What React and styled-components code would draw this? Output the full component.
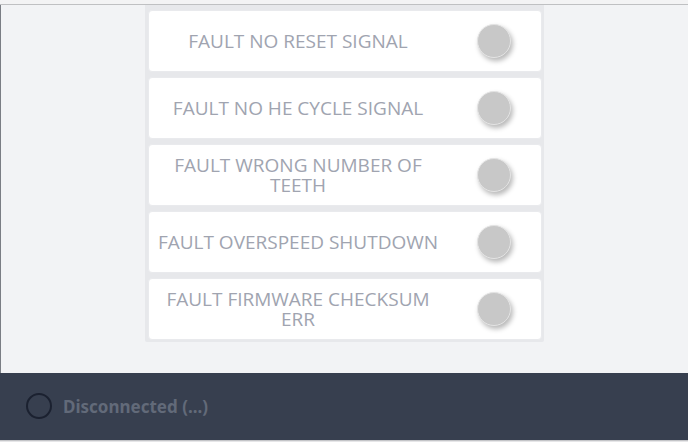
import React, { useLayoutEffect, useRef } from 'react';
import styled, { createGlobalStyle } from 'styled-components';

const GlobalStyle = createGlobalStyle`
    html, body {
        margin: 0;
        padding: 0;
        background: #f2f3f5;
        overflow: hidden;
    }
    * {
        box-sizing: border-box;
    }
`;

const Page = styled.div`
    width: 688px;
    height: 442px;
    display: flex;
    flex-direction: column;
    font-family: "Open Sans", "Noto Sans", sans-serif;
    overflow: hidden;
`;

const TopEdge = styled.div`
    height: 5px;
    flex: none;
    background: #f3f3f4;
    border-bottom: 1px solid #bfc0c2;
`;

const Main = styled.div`
    flex: none;
    height: 368px;
    overflow: hidden;
    padding-bottom: 31px;
    border-left: 1px solid #7a7d84;
    background: #f2f3f5;
`;

const FaultList = styled.div`
    width: 399px;
    margin: 0 auto;
    padding: 3px 2px 2px 3px;
    display: flex;
    flex-direction: column;
    gap: 5px;
    background: #e7e8eb;
    border-radius: 2px;
`;

const Card = styled.div`
    height: 62px;
    flex: none;
    display: flex;
    align-items: center;
    background: #ffffff;
    border: 1px solid #e9eaed;
    border-radius: 4px;
`;

const Label = styled.div`
    flex: 1;
    padding: 0 6px;
    text-align: center;
    font-size: 19px;
    line-height: 20px;
    color: #a0a4b0;
    text-transform: uppercase;
`;

const ToggleCell = styled.div`
    width: 94px;
    flex: none;
    display: flex;
    justify-content: center;
    align-items: center;
`;

const Toggle = styled.div`
    width: 34px;
    height: 34px;
    border-radius: 50%;
    background: ${(p) => (p.$on ? '#5cb85c' : '#c8c8c8')};
    border: 1px solid #e4e4e4;
    box-shadow: 2px 3px 5px rgba(0, 0, 0, 0.28);
`;

const Footer = styled.div`
    flex: none;
    height: 67px;
    display: flex;
    align-items: center;
    gap: 11px;
    padding-left: 26px;
    background: #373f4f;
`;

const StatusRing = styled.div`
    width: 26px;
    height: 26px;
    border-radius: 50%;
    border: 2px solid #1b2130;
    margin-top: -1px;
`;

const StatusText = styled.span`
    font-family: "Noto Sans", "Open Sans", sans-serif;
    font-weight: 700;
    font-size: 17px;
    color: #626a79;
`;

const BottomEdge = styled.div`
    flex: none;
    height: 2px;
    overflow: hidden;
    background: #e6e6e8;
    border-top: 1px solid #c4c5c8;
`;

const BottomText = styled.div`
    margin-top: -1px;
    padding-left: 4px;
    font-size: 30px;
    line-height: 30px;
    letter-spacing: 2px;
    color: #1e2330;
    white-space: nowrap;
`;

const faults = [
    'FAULT NO TOOTH SIGNAL',
    'FAULT NO RESET SIGNAL',
    'FAULT NO HE CYCLE SIGNAL',
    'FAULT WRONG NUMBER OF TEETH',
    'FAULT OVERSPEED SHUTDOWN',
    'FAULT FIRMWARE CHECKSUM ERR',
];

const App = () => {
    const listRef = useRef(null);

    // the list is shown scrolled down by one card
    useLayoutEffect(() => {
        if (listRef.current) listRef.current.scrollTop = 65;
    }, []);

    return (
        <Page>
            <GlobalStyle />
            <TopEdge />
            <Main ref={listRef}>
                <FaultList>
                    {faults.map((f) => (
                        <Card key={f}>
                            <Label>{f}</Label>
                            <ToggleCell>
                                <Toggle />
                            </ToggleCell>
                        </Card>
                    ))}
                </FaultList>
            </Main>
            <Footer>
                <StatusRing />
                <StatusText>Disconnected (...)</StatusText>
            </Footer>
            <BottomEdge>
                <BottomText>ENGINE TIMING STATUS INFO</BottomText>
            </BottomEdge>
        </Page>
    );
};

export default App;
